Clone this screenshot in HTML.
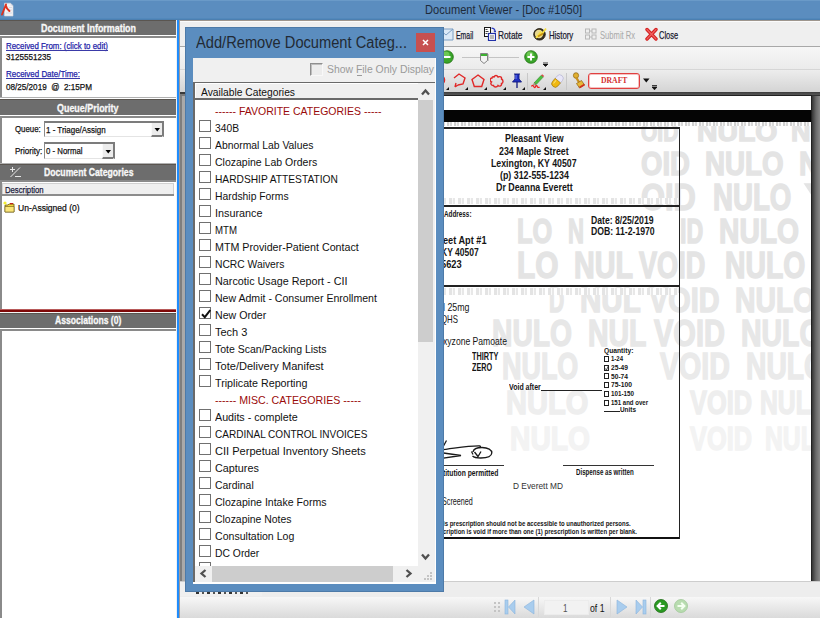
<!DOCTYPE html>
<html><head><meta charset="utf-8"><style>
html,body{margin:0;padding:0;width:820px;height:618px;overflow:hidden;background:#fff;position:relative;font-family:'Liberation Sans', sans-serif}
div{box-sizing:border-box}
</style></head><body>
<div style="position:absolute;left:0px;top:0px;width:820px;height:20px;background:#5b8dbf"></div>
<div style="position:absolute;left:0px;top:0px;width:820px;height:1px;background:#6a9ac8"></div>
<div style="position:absolute;left:0px;top:18px;width:820px;height:1px;background:#5288bb"></div>
<div style="position:absolute;left:0px;top:19px;width:820px;height:1px;background:#4c7fb0"></div>
<svg style="position:absolute;left:0px;top:0px" width="16" height="18" viewBox="0 0 16 18"><path d="M4.5 3.2h6l2.5 2.5v10.3h-8.5z" fill="#f2f2f4" stroke="#d8d8e0" stroke-width="0.6"/><path d="M10.5 5h2M9 7.5h3M9 10h3M6 13h6" stroke="#c8c8d8" stroke-width="0.6"/><path d="M2 14.5L6 4.5M5.8 5.5c.6 2.5 1.5 4.2 3.7 5.6" fill="none" stroke="#e0301c" stroke-width="1.9" stroke-linecap="round"/></svg>
<div style="position:absolute;left:424.80px;top:3.03px;font:normal 13.5px 'Liberation Sans', sans-serif;line-height:13.5px;color:#1e2a3a;white-space:pre;transform:scaleX(0.8215);transform-origin:0 0;">Document Viewer - [Doc #1050]</div>
<div style="position:absolute;left:180px;top:20px;width:640px;height:76px;background:#f0f0f0"></div>
<div style="position:absolute;left:180px;top:20px;width:640px;height:1px;background:#9e968e"></div>
<div style="position:absolute;left:180px;top:21px;width:640px;height:1px;background:#fbfbfb"></div>
<div style="position:absolute;left:180px;top:22px;width:640px;height:24px;background:#efefef"></div>
<div style="position:absolute;left:180px;top:46px;width:640px;height:1px;background:#a8a8a8"></div>
<div style="position:absolute;left:180px;top:47px;width:640px;height:22px;background:linear-gradient(#f6f6f6,#ebebeb)"></div>
<div style="position:absolute;left:180px;top:69px;width:640px;height:1px;background:#d6d6d6"></div>
<div style="position:absolute;left:180px;top:70px;width:640px;height:22px;background:linear-gradient(#ededed,#d4d4d4)"></div>
<div style="position:absolute;left:185px;top:92px;width:635px;height:4px;background:linear-gradient(#3c3c3c,#555 60%,#222)"></div>
<div style="position:absolute;left:180px;top:92px;width:5px;height:2px;background:#3a3a3a"></div>
<div style="position:absolute;left:180px;top:94px;width:5px;height:2px;background:#7a7a7a"></div>
<div style="position:absolute;left:180px;top:96px;width:640px;height:486px;background:#a9a9a9"></div>
<div style="position:absolute;left:180px;top:96px;width:2px;height:486px;background:#7e7e7e"></div>
<div style="position:absolute;left:300px;top:95px;width:512px;height:487px;background:#fff;border-top:1px solid #222;border-right:1px solid #222"></div>
<div style="position:absolute;left:812px;top:96px;width:8px;height:486px;background:linear-gradient(90deg,#353535,#6a6a6a 50%,#8a8a8a)"></div>
<div style="position:absolute;left:180px;top:582px;width:640px;height:36px;background:#ededed"></div>
<div style="position:absolute;left:180px;top:597px;width:640px;height:21px;background:linear-gradient(#f7f7f7,#dadada)"></div>
<div style="position:absolute;left:180px;top:581px;width:640px;height:1px;background:#cdcdcd"></div>
<div style="position:absolute;left:300px;top:96px;width:511px;height:486px;overflow:hidden">
<div style="position:absolute;left:340.70px;top:22.20px;font:bold 28.0px 'Liberation Sans', sans-serif;line-height:28.0px;color:#e4e4e4;white-space:pre;transform:scaleX(0.7493);transform-origin:0 0;-webkit-text-stroke:1.4px #e4e4e4;">OID</div>
<div style="position:absolute;left:397.40px;top:22.20px;font:bold 28.0px 'Liberation Sans', sans-serif;line-height:28.0px;color:#e4e4e4;white-space:pre;transform:scaleX(1.0123);transform-origin:0 0;-webkit-text-stroke:1.4px #e4e4e4;">NULO</div>
<div style="position:absolute;left:491.00px;top:22.20px;font:bold 28.0px 'Liberation Sans', sans-serif;line-height:28.0px;color:#e4e4e4;white-space:pre;transform:scaleX(0.9641);transform-origin:0 0;-webkit-text-stroke:1.4px #e4e4e4;">NU</div>
<div style="position:absolute;left:340.70px;top:50.78px;font:bold 33.43px 'Liberation Sans', sans-serif;line-height:33.43px;color:#e4e4e4;white-space:pre;transform:scaleX(0.8229);transform-origin:0 0;-webkit-text-stroke:1.4px #e4e4e4;">OID</div>
<div style="position:absolute;left:405.00px;top:50.78px;font:bold 33.43px 'Liberation Sans', sans-serif;line-height:33.43px;color:#e4e4e4;white-space:pre;transform:scaleX(0.8290);transform-origin:0 0;-webkit-text-stroke:1.4px #e4e4e4;">NULO</div>
<div style="position:absolute;left:499.00px;top:50.78px;font:bold 33.43px 'Liberation Sans', sans-serif;line-height:33.43px;color:#e4e4e4;white-space:pre;transform:scaleX(0.8492);transform-origin:0 0;-webkit-text-stroke:1.4px #e4e4e4;">NU</div>
<div style="position:absolute;left:340.70px;top:83.53px;font:bold 36.43px 'Liberation Sans', sans-serif;line-height:36.43px;color:#e4e4e4;white-space:pre;transform:scaleX(0.8461);transform-origin:0 0;-webkit-text-stroke:1.4px #e4e4e4;">OID</div>
<div style="position:absolute;left:413.00px;top:83.53px;font:bold 36.43px 'Liberation Sans', sans-serif;line-height:36.43px;color:#e4e4e4;white-space:pre;transform:scaleX(0.7598);transform-origin:0 0;-webkit-text-stroke:1.4px #e4e4e4;">NULO</div>
<div style="position:absolute;left:505.00px;top:83.53px;font:bold 36.43px 'Liberation Sans', sans-serif;line-height:36.43px;color:#e4e4e4;white-space:pre;transform:scaleX(1.8521);transform-origin:0 0;-webkit-text-stroke:1.4px #e4e4e4;">V</div>
<div style="position:absolute;left:217.40px;top:118.32px;font:bold 34.57px 'Liberation Sans', sans-serif;line-height:34.57px;color:#e4e4e4;white-space:pre;transform:scaleX(0.7333);transform-origin:0 0;-webkit-text-stroke:1.4px #e4e4e4;">LO</div>
<div style="position:absolute;left:268.00px;top:118.32px;font:bold 34.57px 'Liberation Sans', sans-serif;line-height:34.57px;color:#e4e4e4;white-space:pre;transform:scaleX(0.6408);transform-origin:0 0;-webkit-text-stroke:1.4px #e4e4e4;">N</div>
<div style="position:absolute;left:379.80px;top:118.32px;font:bold 34.57px 'Liberation Sans', sans-serif;line-height:34.57px;color:#e4e4e4;white-space:pre;transform:scaleX(0.6712);transform-origin:0 0;-webkit-text-stroke:1.4px #e4e4e4;">ID</div>
<div style="position:absolute;left:419.00px;top:118.32px;font:bold 34.57px 'Liberation Sans', sans-serif;line-height:34.57px;color:#e4e4e4;white-space:pre;transform:scaleX(0.8170);transform-origin:0 0;-webkit-text-stroke:1.4px #e4e4e4;">NULO</div>
<div style="position:absolute;left:217.00px;top:152.03px;font:bold 36.43px 'Liberation Sans', sans-serif;line-height:36.43px;color:#e4e4e4;white-space:pre;transform:scaleX(0.8205);transform-origin:0 0;-webkit-text-stroke:1.4px #e4e4e4;">LO</div>
<div style="position:absolute;left:274.00px;top:152.03px;font:bold 36.43px 'Liberation Sans', sans-serif;line-height:36.43px;color:#e4e4e4;white-space:pre;transform:scaleX(0.7881);transform-origin:0 0;-webkit-text-stroke:1.4px #e4e4e4;">NUL</div>
<div style="position:absolute;left:338.70px;top:152.03px;font:bold 36.43px 'Liberation Sans', sans-serif;line-height:36.43px;color:#e4e4e4;white-space:pre;transform:scaleX(0.7446);transform-origin:0 0;-webkit-text-stroke:1.4px #e4e4e4;">VOID</div>
<div style="position:absolute;left:424.80px;top:152.03px;font:bold 36.43px 'Liberation Sans', sans-serif;line-height:36.43px;color:#e4e4e4;white-space:pre;transform:scaleX(0.7772);transform-origin:0 0;-webkit-text-stroke:1.4px #e4e4e4;">NULO</div>
<div style="position:absolute;left:248.70px;top:186.65px;font:bold 35.71px 'Liberation Sans', sans-serif;line-height:35.71px;color:#e7e7e7;white-space:pre;transform:scaleX(0.5931);transform-origin:0 0;-webkit-text-stroke:1.4px #e7e7e7;">D</div>
<div style="position:absolute;left:280.00px;top:186.65px;font:bold 35.71px 'Liberation Sans', sans-serif;line-height:35.71px;color:#e7e7e7;white-space:pre;transform:scaleX(0.8271);transform-origin:0 0;-webkit-text-stroke:1.4px #e7e7e7;">NUL</div>
<div style="position:absolute;left:348.50px;top:186.65px;font:bold 35.71px 'Liberation Sans', sans-serif;line-height:35.71px;color:#e7e7e7;white-space:pre;transform:scaleX(0.8076);transform-origin:0 0;-webkit-text-stroke:1.4px #e7e7e7;">VOID</div>
<div style="position:absolute;left:434.60px;top:186.65px;font:bold 35.71px 'Liberation Sans', sans-serif;line-height:35.71px;color:#e7e7e7;white-space:pre;transform:scaleX(0.7948);transform-origin:0 0;-webkit-text-stroke:1.4px #e7e7e7;">NULO</div>
<div style="position:absolute;left:192.00px;top:219.53px;font:bold 36.43px 'Liberation Sans', sans-serif;line-height:36.43px;color:#e7e7e7;white-space:pre;transform:scaleX(0.7753);transform-origin:0 0;-webkit-text-stroke:1.4px #e7e7e7;">NULO</div>
<div style="position:absolute;left:288.00px;top:219.53px;font:bold 36.43px 'Liberation Sans', sans-serif;line-height:36.43px;color:#e7e7e7;white-space:pre;transform:scaleX(0.7815);transform-origin:0 0;-webkit-text-stroke:1.4px #e7e7e7;">NUL</div>
<div style="position:absolute;left:354.00px;top:219.53px;font:bold 36.43px 'Liberation Sans', sans-serif;line-height:36.43px;color:#e7e7e7;white-space:pre;transform:scaleX(0.7973);transform-origin:0 0;-webkit-text-stroke:1.4px #e7e7e7;">VOID</div>
<div style="position:absolute;left:440.50px;top:219.53px;font:bold 36.43px 'Liberation Sans', sans-serif;line-height:36.43px;color:#e7e7e7;white-space:pre;transform:scaleX(0.7801);transform-origin:0 0;-webkit-text-stroke:1.4px #e7e7e7;">NULO</div>
<div style="position:absolute;left:201.70px;top:252.43px;font:bold 37.14px 'Liberation Sans', sans-serif;line-height:37.14px;color:#eaeaea;white-space:pre;transform:scaleX(0.7254);transform-origin:0 0;-webkit-text-stroke:1.4px #eaeaea;">NULO</div>
<div style="position:absolute;left:360.00px;top:252.43px;font:bold 37.14px 'Liberation Sans', sans-serif;line-height:37.14px;color:#eaeaea;white-space:pre;transform:scaleX(0.7712);transform-origin:0 0;-webkit-text-stroke:1.4px #eaeaea;">VOID</div>
<div style="position:absolute;left:446.00px;top:252.43px;font:bold 37.14px 'Liberation Sans', sans-serif;line-height:37.14px;color:#eaeaea;white-space:pre;transform:scaleX(0.7605);transform-origin:0 0;-webkit-text-stroke:1.4px #eaeaea;">NULO</div>
<div style="position:absolute;left:205.70px;top:290.47px;font:bold 33.57px 'Liberation Sans', sans-serif;line-height:33.57px;color:#eeeeee;white-space:pre;transform:scaleX(0.8655);transform-origin:0 0;-webkit-text-stroke:1.4px #eeeeee;">NULO</div>
<div style="position:absolute;left:390.00px;top:290.47px;font:bold 33.57px 'Liberation Sans', sans-serif;line-height:33.57px;color:#eeeeee;white-space:pre;transform:scaleX(0.7555);transform-origin:0 0;-webkit-text-stroke:1.4px #eeeeee;">VOID</div>
<div style="position:absolute;left:460.00px;top:290.47px;font:bold 33.57px 'Liberation Sans', sans-serif;line-height:33.57px;color:#eeeeee;white-space:pre;transform:scaleX(0.7361);transform-origin:0 0;-webkit-text-stroke:1.4px #eeeeee;">NULO</div>
<div style="position:absolute;left:210.00px;top:325.83px;font:bold 33.14px 'Liberation Sans', sans-serif;line-height:33.14px;color:#f3f3f3;white-space:pre;transform:scaleX(0.8525);transform-origin:0 0;-webkit-text-stroke:1.4px #f3f3f3;">NULO</div>
<div style="position:absolute;left:390.00px;top:325.83px;font:bold 33.14px 'Liberation Sans', sans-serif;line-height:33.14px;color:#f3f3f3;white-space:pre;transform:scaleX(0.7654);transform-origin:0 0;-webkit-text-stroke:1.4px #f3f3f3;">VOID</div>
<div style="position:absolute;left:465.00px;top:325.83px;font:bold 33.14px 'Liberation Sans', sans-serif;line-height:33.14px;color:#f3f3f3;white-space:pre;transform:scaleX(0.7459);transform-origin:0 0;-webkit-text-stroke:1.4px #f3f3f3;">NULO</div>
</div>
<div style="position:absolute;left:300px;top:110px;width:511px;height:12px;background:#050505"></div>
<div style="position:absolute;left:440px;top:122px;width:371px;height:4px;background:repeating-linear-gradient(90deg,#cfcfcf 0 2px,#f4f4f4 2px 3px,#d8d8d8 3px 5px,#fff 5px 7px)"></div>
<div style="position:absolute;left:440px;top:198px;width:238px;height:6px;background:repeating-linear-gradient(90deg,#e4e4e4 0 3px,#fafafa 3px 4px,#e8e8e8 4px 6px,#fff 6px 9px)"></div>
<div style="position:absolute;left:440px;top:288px;width:238px;height:7px;background:repeating-linear-gradient(90deg,#e4e4e4 0 3px,#fafafa 3px 4px,#e8e8e8 4px 6px,#fff 6px 9px)"></div>
<div style="position:absolute;left:300px;top:127px;width:380px;height:1.5px;background:#222"></div>
<div style="position:absolute;left:300px;top:205px;width:380px;height:1.5px;background:#222"></div>
<div style="position:absolute;left:300px;top:285px;width:380px;height:1.5px;background:#222"></div>
<div style="position:absolute;left:300px;top:537px;width:380px;height:2px;background:#111"></div>
<div style="position:absolute;left:678.5px;top:127px;width:1.5px;height:412px;background:#222"></div>
<div style="position:absolute;left:504.65px;top:133.15px;font:bold 11px 'Liberation Sans', sans-serif;line-height:11px;color:#151515;white-space:pre;transform:scaleX(0.8022);transform-origin:0 0;">Pleasant View</div>
<div style="position:absolute;left:499.15px;top:145.65px;font:bold 11px 'Liberation Sans', sans-serif;line-height:11px;color:#151515;white-space:pre;transform:scaleX(0.8027);transform-origin:0 0;">234 Maple Street</div>
<div style="position:absolute;left:491.20px;top:158.15px;font:bold 11px 'Liberation Sans', sans-serif;line-height:11px;color:#151515;white-space:pre;transform:scaleX(0.7971);transform-origin:0 0;">Lexington, KY 40507</div>
<div style="position:absolute;left:499.60px;top:170.15px;font:bold 11px 'Liberation Sans', sans-serif;line-height:11px;color:#151515;white-space:pre;transform:scaleX(0.8037);transform-origin:0 0;">(p) 312-555-1234</div>
<div style="position:absolute;left:495.65px;top:182.15px;font:bold 11px 'Liberation Sans', sans-serif;line-height:11px;color:#151515;white-space:pre;transform:scaleX(0.8042);transform-origin:0 0;">Dr Deanna Everett</div>
<div style="position:absolute;left:443.50px;top:210.28px;font:bold 8.5px 'Liberation Sans', sans-serif;line-height:8.5px;color:#151515;white-space:pre;transform:scaleX(0.7464);transform-origin:0 0;">Address:</div>
<div style="position:absolute;left:590.60px;top:215.15px;font:bold 11px 'Liberation Sans', sans-serif;line-height:11px;color:#151515;white-space:pre;transform:scaleX(0.7862);transform-origin:0 0;">Date: 8/25/2019</div>
<div style="position:absolute;left:590.60px;top:226.15px;font:bold 11px 'Liberation Sans', sans-serif;line-height:11px;color:#151515;white-space:pre;transform:scaleX(0.7892);transform-origin:0 0;">DOB: 11-2-1970</div>
<div style="position:absolute;left:442.50px;top:235.15px;font:bold 11px 'Liberation Sans', sans-serif;line-height:11px;color:#151515;white-space:pre;transform:scaleX(0.8338);transform-origin:0 0;">eet Apt #1</div>
<div style="position:absolute;left:441.00px;top:247.15px;font:bold 11px 'Liberation Sans', sans-serif;line-height:11px;color:#151515;white-space:pre;transform:scaleX(0.7736);transform-origin:0 0;">KY 40507</div>
<div style="position:absolute;left:440.50px;top:259.15px;font:bold 11px 'Liberation Sans', sans-serif;line-height:11px;color:#151515;white-space:pre;transform:scaleX(0.8454);transform-origin:0 0;">5623</div>
<div style="position:absolute;left:443.00px;top:302.07px;font:normal 10.5px 'Liberation Sans', sans-serif;line-height:10.5px;color:#151515;white-space:pre;transform:scaleX(0.8409);transform-origin:0 0;">l 25mg</div>
<div style="position:absolute;left:440.50px;top:314.07px;font:normal 10.5px 'Liberation Sans', sans-serif;line-height:10.5px;color:#151515;white-space:pre;transform:scaleX(0.7467);transform-origin:0 0;">QHS</div>
<div style="position:absolute;left:442.50px;top:335.57px;font:normal 10.5px 'Liberation Sans', sans-serif;line-height:10.5px;color:#151515;white-space:pre;transform:scaleX(0.8182);transform-origin:0 0;">xyzone Pamoate</div>
<div style="position:absolute;left:471.70px;top:352.00px;font:bold 10px 'Liberation Sans', sans-serif;line-height:10px;color:#151515;white-space:pre;transform:scaleX(0.7283);transform-origin:0 0;">THIRTY</div>
<div style="position:absolute;left:471.70px;top:362.50px;font:bold 10px 'Liberation Sans', sans-serif;line-height:10px;color:#151515;white-space:pre;transform:scaleX(0.7199);transform-origin:0 0;">ZERO</div>
<div style="position:absolute;left:509.00px;top:382.43px;font:bold 9.5px 'Liberation Sans', sans-serif;line-height:9.5px;color:#151515;white-space:pre;transform:scaleX(0.7377);transform-origin:0 0;">Void after</div>
<div style="position:absolute;left:541px;top:390px;width:61px;height:1px;background:#222"></div>
<div style="position:absolute;left:604.00px;top:346.70px;font:bold 8px 'Liberation Sans', sans-serif;line-height:8px;color:#151515;white-space:pre;transform:scaleX(0.8374);transform-origin:0 0;">Quantity:</div>
<div style="position:absolute;left:604px;top:356.0px;width:5px;height:6px;border:1px solid #222;background:#fff"></div>
<div style="position:absolute;left:611.00px;top:355.20px;font:bold 8px 'Liberation Sans', sans-serif;line-height:8px;color:#151515;white-space:pre;transform:scaleX(0.7493);transform-origin:0 0;">1-24</div>
<div style="position:absolute;left:604px;top:364.7px;width:5px;height:6px;border:1px solid #222;background:#fff"></div>
<div style="position:absolute;left:611.00px;top:363.90px;font:bold 8px 'Liberation Sans', sans-serif;line-height:8px;color:#151515;white-space:pre;transform:scaleX(0.8305);transform-origin:0 0;">25-49</div>
<div style="position:absolute;left:604px;top:373.4px;width:5px;height:6px;border:1px solid #222;background:#fff"></div>
<div style="position:absolute;left:611.00px;top:372.60px;font:bold 8px 'Liberation Sans', sans-serif;line-height:8px;color:#151515;white-space:pre;transform:scaleX(0.8305);transform-origin:0 0;">50-74</div>
<div style="position:absolute;left:604px;top:382.1px;width:5px;height:6px;border:1px solid #222;background:#fff"></div>
<div style="position:absolute;left:611.00px;top:381.30px;font:bold 8px 'Liberation Sans', sans-serif;line-height:8px;color:#151515;white-space:pre;transform:scaleX(0.8426);transform-origin:0 0;">75-100</div>
<div style="position:absolute;left:604px;top:390.8px;width:5px;height:6px;border:1px solid #222;background:#fff"></div>
<div style="position:absolute;left:611.00px;top:390.00px;font:bold 8px 'Liberation Sans', sans-serif;line-height:8px;color:#151515;white-space:pre;transform:scaleX(0.7834);transform-origin:0 0;">101-150</div>
<div style="position:absolute;left:604px;top:399.5px;width:5px;height:6px;border:1px solid #222;background:#fff"></div>
<div style="position:absolute;left:611.00px;top:398.70px;font:bold 8px 'Liberation Sans', sans-serif;line-height:8px;color:#151515;white-space:pre;transform:scaleX(0.7563);transform-origin:0 0;">151 and over</div>
<svg style="position:absolute;left:604px;top:364.5px" width="5" height="6"><path d="M0.5 3l2 2L4.5 0.5" stroke="#222" stroke-width="0.8" fill="none"/></svg>
<div style="position:absolute;left:604px;top:411px;width:16px;height:1px;background:#222"></div>
<div style="position:absolute;left:620.00px;top:405.70px;font:bold 8px 'Liberation Sans', sans-serif;line-height:8px;color:#151515;white-space:pre;transform:scaleX(0.8000);transform-origin:0 0;">Units</div>
<svg style="position:absolute;left:430px;top:436px" width="80" height="28" viewBox="430 436 80 28"><path d="M443.5 446l3-5.5M440 450c14-1.5 28-4.5 39.5-4.2c1.5.4 1 1.6-.8 2.4M440 452.5l21 3l-21 3.2M473 452c.5-3 4-4.5 9-4.5c6 0 10 2.5 9.8 5.5c-.3 3.5-5.5 5-11 5c-4 0-7.5-1.2-8.3-2M471.5 451.5l1.5 3M474.5 452l3.5 4.5l3-5" fill="none" stroke="#1a1a1a" stroke-width="1.3"/></svg>
<div style="position:absolute;left:430px;top:465px;width:74px;height:1px;background:#333"></div>
<div style="position:absolute;left:563px;top:464.5px;width:91px;height:1px;background:#333"></div>
<div style="position:absolute;left:442.50px;top:468.98px;font:bold 9.2px 'Liberation Sans', sans-serif;line-height:9.2px;color:#151515;white-space:pre;transform:scaleX(0.7346);transform-origin:0 0;">titution permitted</div>
<div style="position:absolute;left:575.70px;top:468.35px;font:bold 9px 'Liberation Sans', sans-serif;line-height:9px;color:#151515;white-space:pre;transform:scaleX(0.6826);transform-origin:0 0;">Dispense as written</div>
<div style="position:absolute;left:513.00px;top:480.67px;font:normal 9.8px 'Liberation Sans', sans-serif;line-height:9.8px;color:#333;white-space:pre;transform:scaleX(0.8504);transform-origin:0 0;">D Everett MD</div>
<div style="position:absolute;left:441.50px;top:495.57px;font:normal 10.5px 'Liberation Sans', sans-serif;line-height:10.5px;color:#151515;white-space:pre;transform:scaleX(0.6852);transform-origin:0 0;">Screened</div>
<div style="position:absolute;left:442.50px;top:520.20px;font:bold 8px 'Liberation Sans', sans-serif;line-height:8px;color:#151515;white-space:pre;transform:scaleX(0.7500);transform-origin:0 0;">is prescription should not be accessible to unauthorized persons.</div>
<div style="position:absolute;left:442.50px;top:528.20px;font:bold 8px 'Liberation Sans', sans-serif;line-height:8px;color:#151515;white-space:pre;transform:scaleX(0.7486);transform-origin:0 0;">cription is void if more than one (1) prescription is written per blank.</div>
<svg style="position:absolute;left:438px;top:27px" width="16" height="14" viewBox="0 0 16 14"><path d="M1 2h14v11H1z" fill="#dce9f7" stroke="#7d9fc4" stroke-width="1"/><path d="M1 2l7 6l7-6" fill="none" stroke="#7d9fc4" stroke-width="1"/></svg>
<div style="position:absolute;left:455.90px;top:30.28px;font:normal 10.5px 'Liberation Sans', sans-serif;line-height:10.5px;color:#1a1a30;white-space:pre;transform:scaleX(0.6548);transform-origin:0 0;-webkit-text-stroke:0.25px currentColor;">Email</div>
<svg style="position:absolute;left:484px;top:27px" width="12" height="14" viewBox="0 0 12 14"><rect x="0.5" y="0.5" width="6" height="9" fill="#fff" stroke="#151515"/><path d="M1.5 2.5h2M1.5 4.5h3M1.5 6.5h2" stroke="#444" stroke-width="1"/><rect x="4.5" y="6.5" width="7" height="7" fill="#fff" stroke="#2030a8" stroke-width="1.2"/><rect x="6" y="8" width="4" height="4" fill="#b8b8b8"/><path d="M7.5 1.2c2 0 3.5 1 3.5 3.3" fill="none" stroke="#2a3ac0" stroke-width="1.2"/><path d="M9.3 3.8h3.4l-1.7 2z" fill="#2a3ac0"/></svg>
<div style="position:absolute;left:498.30px;top:30.28px;font:normal 10.5px 'Liberation Sans', sans-serif;line-height:10.5px;color:#1a1a30;white-space:pre;transform:scaleX(0.7887);transform-origin:0 0;-webkit-text-stroke:0.25px currentColor;">Rotate</div>
<svg style="position:absolute;left:533px;top:27px" width="14" height="14" viewBox="0 0 14 14"><circle cx="6.5" cy="7.3" r="5.8" fill="#3a3020" stroke="#1a1408" stroke-width="0.8"/><circle cx="6" cy="7" r="4.2" fill="#e8d890"/><path d="M3 11l4.5-5.5l1 2l4.5-6" fill="none" stroke="#f8e040" stroke-width="1.8"/><path d="M5 9.5l5-3" stroke="#c89010" stroke-width="1.6"/></svg>
<div style="position:absolute;left:548.80px;top:30.28px;font:normal 10.5px 'Liberation Sans', sans-serif;line-height:10.5px;color:#1a1a30;white-space:pre;transform:scaleX(0.7407);transform-origin:0 0;-webkit-text-stroke:0.25px currentColor;">History</div>
<svg style="position:absolute;left:585px;top:28px" width="12" height="12" viewBox="0 0 12 12"><g fill="none" stroke="#b8b8b8" stroke-width="1"><rect x="0.5" y="1" width="4" height="4"/><rect x="7" y="1" width="4" height="4"/><rect x="0.5" y="7" width="4" height="4"/><rect x="7" y="7" width="4" height="4"/><path d="M4.5 3h2.5M4.5 9h2.5"/></g></svg>
<div style="position:absolute;left:599.50px;top:30.28px;font:normal 10.5px 'Liberation Sans', sans-serif;line-height:10.5px;color:#a8a8a8;white-space:pre;transform:scaleX(0.7246);transform-origin:0 0;">Submit Rx</div>
<svg style="position:absolute;left:645px;top:27px" width="13" height="14" viewBox="0 0 13 14"><path d="M2 2.5l9 9.5M11 2.5l-9 9.5" stroke="#d42020" stroke-width="3.4" stroke-linecap="round"/><path d="M2 2.5l9 9.5M11 2.5l-9 9.5" stroke="#f06060" stroke-width="1.2" stroke-linecap="round"/></svg>
<div style="position:absolute;left:659.40px;top:30.28px;font:normal 10.5px 'Liberation Sans', sans-serif;line-height:10.5px;color:#1a1a30;white-space:pre;transform:scaleX(0.7111);transform-origin:0 0;-webkit-text-stroke:0.25px currentColor;">Close</div>
<svg style="position:absolute;left:440px;top:50px" width="14" height="14" viewBox="0 0 14 14"><circle cx="7" cy="7" r="6.3" fill="#3aa52a" stroke="#207010" stroke-width="0.8"/><circle cx="6" cy="5" r="3.5" fill="#8fe070" opacity="0.6"/><path d="M3.5 7h7" stroke="#fff" stroke-width="2"/></svg>
<div style="position:absolute;left:462px;top:57px;width:57px;height:1px;background:#c4c4c4"></div>
<div style="position:absolute;left:488px;top:54px;width:1px;height:7px;background:#c8c8c8"></div>
<svg style="position:absolute;left:480px;top:53px" width="8" height="11" viewBox="0 0 8 11"><path d="M0.5 0.5h7v7l-3.5 3l-3.5-3z" fill="#f4f4f4" stroke="#777" stroke-width="0.9"/><rect x="1" y="1" width="6" height="2" fill="#3cb030"/></svg>
<svg style="position:absolute;left:524px;top:50px" width="14" height="14" viewBox="0 0 14 14"><circle cx="7" cy="7" r="6.3" fill="#3aa52a" stroke="#207010" stroke-width="0.8"/><circle cx="6" cy="5" r="3.5" fill="#8fe070" opacity="0.6"/><path d="M3.5 7h7M7 3.5v7" stroke="#fff" stroke-width="2"/></svg>
<svg style="position:absolute;left:543px;top:62px" width="5" height="5" viewBox="0 0 5 5"><path d="M0 0h5M0 2h5L2.5 4.5z" stroke="#111" stroke-width="0.8" fill="#111"/></svg>
<svg style="position:absolute;left:434px;top:73px" width="12" height="14" viewBox="0 0 12 14"><circle cx="6" cy="7" r="4.5" fill="none" stroke="#e02828" stroke-width="1.6"/></svg>
<svg style="position:absolute;left:446px;top:87px" width="3" height="3" viewBox="0 0 3 3"><path d="M3 0v3H0z" fill="#111"/></svg>
<svg style="position:absolute;left:465px;top:87px" width="3" height="3" viewBox="0 0 3 3"><path d="M3 0v3H0z" fill="#111"/></svg>
<svg style="position:absolute;left:484px;top:87px" width="3" height="3" viewBox="0 0 3 3"><path d="M3 0v3H0z" fill="#111"/></svg>
<svg style="position:absolute;left:503px;top:87px" width="3" height="3" viewBox="0 0 3 3"><path d="M3 0v3H0z" fill="#111"/></svg>
<svg style="position:absolute;left:522px;top:87px" width="3" height="3" viewBox="0 0 3 3"><path d="M3 0v3H0z" fill="#111"/></svg>
<svg style="position:absolute;left:543px;top:87px" width="3" height="3" viewBox="0 0 3 3"><path d="M3 0v3H0z" fill="#111"/></svg>
<svg style="position:absolute;left:452px;top:73px" width="15" height="15" viewBox="0 0 15 15"><path d="M2 5l5-4l6 4l-2 6l-5 1M6 12l-3 2M3 14l1-4" fill="none" stroke="#e02828" stroke-width="1.4"/></svg>
<svg style="position:absolute;left:471px;top:74px" width="14" height="14" viewBox="0 0 14 14"><path d="M7 1l6 4.5l-2.3 7h-7.4l-2.3-7z" fill="none" stroke="#e02828" stroke-width="1.4"/></svg>
<svg style="position:absolute;left:490px;top:74px" width="14" height="14" viewBox="0 0 14 14"><path d="M4 3c1-2 3-2 4 0c2-1 4 0 3.5 2c2 1 2 4 0 4.5c.5 2-2 3.5-3.5 2c-1 2-4 2-4.5 0c-2 .5-3.5-2-2-3.5c-2-1-1.5-4 .5-4c0-1 1-1.5 2-1z" fill="none" stroke="#e02828" stroke-width="1.4"/></svg>
<svg style="position:absolute;left:511px;top:73px" width="12" height="16" viewBox="0 0 12 16"><path d="M3 1h6M4 1v5l-2.5 3h9L8 6V1" fill="#2030c0" stroke="#101880" stroke-width="0.9"/><path d="M6 9v6" stroke="#101880" stroke-width="1.3"/><path d="M5 2v4" stroke="#7080ff" stroke-width="1"/></svg>
<div style="position:absolute;left:527px;top:73px;width:1px;height:17px;background:#c8c8c8"></div>
<svg style="position:absolute;left:530px;top:72px" width="15" height="17" viewBox="0 0 15 17"><path d="M4.2 10.8l7-7.5l2 1.8l-7 7.5z" fill="#4cc040" stroke="#2a7a20" stroke-width="0.5"/><path d="M11.2 3.3l1-1l2 1.8l-.8 1z" fill="#e04848"/><path d="M4.2 10.8l-.7 2.4l2.6-.6z" fill="#e8c890" stroke="#333" stroke-width="0.4"/><path d="M1.5 14.5c.8-1.5 1.5-1.5 2.2 0s1.4 1.4 2-.3c.6-1.2 1.3-.4 1.8.6c.5.8 1.3.8 2 .2" fill="none" stroke="#f02020" stroke-width="1.3"/></svg>
<svg style="position:absolute;left:550px;top:73px" width="15" height="16" viewBox="0 0 15 16"><g transform="rotate(-50 7.5 8)"><rect x="0.5" y="4.5" width="14" height="7" rx="3.5" fill="#e8e6f8" stroke="#b0b0d0" stroke-width="0.6"/><path d="M8 4.5H4a3.5 3.5 0 0 0 0 7h4z" fill="#f0b810" stroke="#a07808" stroke-width="0.6"/><path d="M3 6.5h4" stroke="#f8e070" stroke-width="1"/></g></svg>
<div style="position:absolute;left:566px;top:73px;width:1px;height:17px;background:#c8c8c8"></div>
<svg style="position:absolute;left:571px;top:72px" width="15" height="17" viewBox="0 0 15 17"><ellipse cx="5" cy="3.5" rx="2.6" ry="2.8" fill="#e0b030" stroke="#8a6010" stroke-width="0.7"/><path d="M5.2 5.5l3 5" stroke="#c89020" stroke-width="2.4"/><path d="M5.5 11.5l5-3l3 4.5l-5 3z" fill="#e8b838" stroke="#8a6010" stroke-width="0.7"/><path d="M8.5 15.5l5-3" stroke="#d03020" stroke-width="1.6"/></svg>
<div style="position:absolute;left:588px;top:73px;width:52px;height:16px;background:#fff;border:1.5px solid #e04040;border-radius:3px;box-shadow:inset 0 0 0 1px #f6c0c0"></div>
<div style="position:absolute;left:600.75px;top:76.15px;font:bold 9px 'Liberation Serif', serif;line-height:9px;color:#d43030;white-space:pre;transform:scaleX(0.8548);transform-origin:0 0;">DRAFT</div>
<svg style="position:absolute;left:643px;top:78px" width="7" height="5" viewBox="0 0 7 5"><path d="M0 0.5h6.5L3.25 4.5z" fill="#111"/></svg>
<svg style="position:absolute;left:652px;top:85px" width="5" height="5" viewBox="0 0 5 5"><path d="M0 0.5h5M0 2h5L2.5 4.8z" stroke="#111" stroke-width="0.8" fill="#111"/></svg>
<div style="position:absolute;left:180px;top:582px;width:82px;height:14px;background:#f0f0f0"></div>
<div style="position:absolute;left:196px;top:592px;width:52px;height:1.5px;background:repeating-linear-gradient(90deg,#333 0 3px,transparent 3px 6px,#555 6px 8px,transparent 8px 11px)"></div>
<svg style="position:absolute;left:494px;top:602px" width="7" height="10" viewBox="0 0 7 10"><g fill="#c4c4c4"><rect x="0" y="0" width="2" height="2"/><rect x="4" y="0" width="2" height="2"/><rect x="0" y="4" width="2" height="2"/><rect x="4" y="4" width="2" height="2"/><rect x="0" y="8" width="2" height="2"/><rect x="4" y="8" width="2" height="2"/></g></svg>
<svg style="position:absolute;left:504px;top:599px" width="12" height="16" viewBox="0 0 12 16"><rect x="1" y="1" width="3" height="14" fill="#a9cdee" stroke="#8ab4dc" stroke-width="0.6"/><path d="M11 1L4.5 8L11 15z" fill="#a9cdee" stroke="#8ab4dc" stroke-width="0.6"/></svg>
<svg style="position:absolute;left:523px;top:599px" width="12" height="16" viewBox="0 0 12 16"><path d="M11 1L1 8L11 15z" fill="#a9cdee" stroke="#8ab4dc" stroke-width="0.6"/></svg>
<div style="position:absolute;left:538px;top:597px;width:1px;height:20px;background:#d8d8d8"></div>
<div style="position:absolute;left:544px;top:600px;width:45px;height:15px;background:#f2f2f2;border:1px solid #ececec"></div>
<div style="position:absolute;left:563.45px;top:602.58px;font:normal 10.5px 'Liberation Sans', sans-serif;line-height:10.5px;color:#555;white-space:pre;transform:scaleX(0.7701);transform-origin:0 0;">1</div>
<div style="position:absolute;left:590.40px;top:602.58px;font:normal 10.5px 'Liberation Sans', sans-serif;line-height:10.5px;color:#111;white-space:pre;transform:scaleX(0.8335);transform-origin:0 0;">of 1</div>
<div style="position:absolute;left:610px;top:597px;width:1px;height:20px;background:#d8d8d8"></div>
<svg style="position:absolute;left:616px;top:599px" width="12" height="16" viewBox="0 0 12 16"><path d="M1 1L11 8L1 15z" fill="#a9cdee" stroke="#8ab4dc" stroke-width="0.6"/></svg>
<svg style="position:absolute;left:635px;top:599px" width="12" height="16" viewBox="0 0 12 16"><path d="M1 1L7.5 8L1 15z" fill="#a9cdee" stroke="#8ab4dc" stroke-width="0.6"/><rect x="8" y="1" width="3" height="14" fill="#a9cdee" stroke="#8ab4dc" stroke-width="0.6"/></svg>
<div style="position:absolute;left:650px;top:597px;width:1px;height:20px;background:#d8d8d8"></div>
<svg style="position:absolute;left:654px;top:599px" width="14" height="14" viewBox="0 0 14 14"><circle cx="7" cy="7" r="6.5" fill="#2a9a22" stroke="#1a6a12" stroke-width="0.8"/><path d="M10.5 7h-6.5M6.8 3.8L3.6 7l3.2 3.2" fill="none" stroke="#fff" stroke-width="2"/></svg>
<svg style="position:absolute;left:674px;top:599px" width="14" height="14" viewBox="0 0 14 14"><circle cx="7" cy="7" r="6.5" fill="#b8dcb0" stroke="#a0c898" stroke-width="0.8"/><path d="M3.5 7h6.5M7.2 3.8L10.4 7l-3.2 3.2" fill="none" stroke="#f4fff0" stroke-width="2"/></svg>
<div style="position:absolute;left:0px;top:20px;width:176px;height:598px;background:#fff"></div>
<div style="position:absolute;left:0px;top:20px;width:176px;height:15px;background:#6d6d6d;border-top:1px solid #5a5550"></div>
<div style="position:absolute;left:40.50px;top:23.90px;font:bold 10px 'Liberation Sans', sans-serif;line-height:10px;color:#f8f8f8;white-space:pre;transform:scaleX(0.8906);transform-origin:0 0;-webkit-text-stroke:0.3px #f8f8f8;">Document Information</div>
<div style="position:absolute;left:0px;top:35px;width:176px;height:1px;background:#fff"></div>
<div style="position:absolute;left:0px;top:36px;width:176px;height:2px;background:#8a8a8a"></div>
<div style="position:absolute;left:0px;top:38px;width:2px;height:60px;background:#8a8a8a"></div>
<div style="position:absolute;left:6.00px;top:41.04px;font:normal 9.6px 'Liberation Sans', sans-serif;line-height:9.6px;color:#2222a8;white-space:pre;transform:scaleX(0.8211);transform-origin:0 0;-webkit-text-stroke:0.25px currentColor;">Received From: (click to edit)</div>
<div style="position:absolute;left:6px;top:50px;width:102px;height:1px;background:#3a3aa8"></div>
<div style="position:absolute;left:6.00px;top:52.44px;font:normal 9.6px 'Liberation Sans', sans-serif;line-height:9.6px;color:#111;white-space:pre;transform:scaleX(0.8433);transform-origin:0 0;-webkit-text-stroke:0.25px currentColor;">3125551235</div>
<div style="position:absolute;left:6.00px;top:69.04px;font:normal 9.6px 'Liberation Sans', sans-serif;line-height:9.6px;color:#2222a8;white-space:pre;transform:scaleX(0.8293);transform-origin:0 0;-webkit-text-stroke:0.25px currentColor;">Received Date/Time:</div>
<div style="position:absolute;left:6px;top:78px;width:74px;height:1px;background:#3a3aa8"></div>
<div style="position:absolute;left:6.00px;top:81.64px;font:normal 9.6px 'Liberation Sans', sans-serif;line-height:9.6px;color:#111;white-space:pre;transform:scaleX(0.8474);transform-origin:0 0;-webkit-text-stroke:0.25px currentColor;">08/25/2019  @  2:15PM</div>
<div style="position:absolute;left:0px;top:97px;width:176px;height:1px;background:#b0b0b0"></div>
<div style="position:absolute;left:0px;top:99px;width:176px;height:16px;background:#6d6d6d;border-top:1px solid #5a5550"></div>
<div style="position:absolute;left:57.25px;top:103.70px;font:bold 10px 'Liberation Sans', sans-serif;line-height:10px;color:#f8f8f8;white-space:pre;transform:scaleX(0.8925);transform-origin:0 0;-webkit-text-stroke:0.3px #f8f8f8;">Queue/Priority</div>
<div style="position:absolute;left:0px;top:115px;width:176px;height:1px;background:#fff"></div>
<div style="position:absolute;left:0px;top:116px;width:176px;height:2px;background:#8a8a8a"></div>
<div style="position:absolute;left:0px;top:118px;width:2px;height:46px;background:#8a8a8a"></div>
<div style="position:absolute;left:14.60px;top:124.24px;font:normal 9.6px 'Liberation Sans', sans-serif;line-height:9.6px;color:#111;white-space:pre;transform:scaleX(0.8195);transform-origin:0 0;-webkit-text-stroke:0.25px currentColor;">Queue:</div>
<div style="position:absolute;left:44px;top:121px;width:120px;height:16px;background:#fff;border-style:solid;border-width:2px 2px 1px 1px;border-color:#7c7c7c #7c7c7c #e4e4e4 #8a8a8a"></div>
<div style="position:absolute;left:151px;top:123px;width:11px;height:14px;background:#ececec;border-left:1px solid #fafafa;border-bottom:2px solid #7c7c7c"></div>
<svg style="position:absolute;left:154px;top:128px" width="7" height="4"><path d="M0.5 0h5.5L3.25 3.5z" fill="#000"/></svg>
<div style="position:absolute;left:46.00px;top:124.64px;font:normal 9.6px 'Liberation Sans', sans-serif;line-height:9.6px;color:#111;white-space:pre;transform:scaleX(0.8292);transform-origin:0 0;-webkit-text-stroke:0.25px currentColor;">1 - Triage/Assign</div>
<div style="position:absolute;left:14.60px;top:145.64px;font:normal 9.6px 'Liberation Sans', sans-serif;line-height:9.6px;color:#111;white-space:pre;transform:scaleX(0.8396);transform-origin:0 0;-webkit-text-stroke:0.25px currentColor;">Priority:</div>
<div style="position:absolute;left:44px;top:142px;width:71px;height:17px;background:#fff;border-style:solid;border-width:2px 2px 1px 1px;border-color:#7c7c7c #7c7c7c #e4e4e4 #8a8a8a"></div>
<div style="position:absolute;left:102px;top:144px;width:11px;height:15px;background:#ececec;border-left:1px solid #fafafa;border-bottom:2px solid #7c7c7c"></div>
<svg style="position:absolute;left:105px;top:150px" width="7" height="4"><path d="M0.5 0h5.5L3.25 3.5z" fill="#000"/></svg>
<div style="position:absolute;left:46.00px;top:146.44px;font:normal 9.6px 'Liberation Sans', sans-serif;line-height:9.6px;color:#111;white-space:pre;transform:scaleX(0.8151);transform-origin:0 0;-webkit-text-stroke:0.25px currentColor;">0 - Normal</div>
<div style="position:absolute;left:0px;top:163px;width:176px;height:1px;background:#b0b0b0"></div>
<div style="position:absolute;left:0px;top:164px;width:176px;height:16px;background:#6d6d6d;border-top:1px solid #5a5550"></div>
<div style="position:absolute;left:43.55px;top:168.10px;font:bold 10px 'Liberation Sans', sans-serif;line-height:10px;color:#f8f8f8;white-space:pre;transform:scaleX(0.8659);transform-origin:0 0;-webkit-text-stroke:0.3px #f8f8f8;">Document Categories</div>
<svg style="position:absolute;left:9px;top:166px" width="13" height="12" viewBox="0 0 13 12"><path d="M1 3.5h5M3.5 1v5M1.5 11L11 1.5M6 10.5h6" stroke="#e8e8e8" stroke-width="1" fill="none"/></svg>
<div style="position:absolute;left:0px;top:180px;width:176px;height:2px;background:#8a8a8a"></div>
<div style="position:absolute;left:0px;top:182px;width:2px;height:128px;background:#8a8a8a"></div>
<div style="position:absolute;left:2px;top:183px;width:172px;height:13px;background:#efefef;border:1px solid #d0d0d0"></div>
<div style="position:absolute;left:2px;top:194px;width:172px;height:2px;background:#8c8c8c"></div>
<div style="position:absolute;left:5.40px;top:184.64px;font:normal 9.6px 'Liberation Sans', sans-serif;line-height:9.6px;color:#1a1a3a;white-space:pre;transform:scaleX(0.8042);transform-origin:0 0;-webkit-text-stroke:0.25px currentColor;">Description</div>
<svg style="position:absolute;left:3px;top:201px" width="13" height="12" viewBox="0 0 13 12"><path d="M2 4h3l1-1h5v8H2z" fill="#f1d23e" stroke="#6b5a10" stroke-width="0.8"/><path d="M2 5.5h9v5.5H2z" fill="#fbe67a" stroke="#6b5a10" stroke-width="0.6"/><circle cx="2" cy="2" r="1.6" fill="#f6f030"/><path d="M7 2.6h3" stroke="#c02020" stroke-width="1.2"/></svg>
<div style="position:absolute;left:18.20px;top:203.44px;font:normal 9.6px 'Liberation Sans', sans-serif;line-height:9.6px;color:#111;white-space:pre;transform:scaleX(0.8885);transform-origin:0 0;-webkit-text-stroke:0.25px currentColor;">Un-Assigned (0)</div>
<div style="position:absolute;left:0px;top:309px;width:177px;height:1px;background:#b85a5a"></div>
<div style="position:absolute;left:0px;top:310px;width:177px;height:2px;background:#7e0808"></div>
<div style="position:absolute;left:0px;top:312px;width:176px;height:1px;background:#f4f4f4"></div>
<div style="position:absolute;left:0px;top:313px;width:176px;height:15px;background:#6d6d6d;border-top:1px solid #5a5550"></div>
<div style="position:absolute;left:54.85px;top:316.10px;font:bold 10px 'Liberation Sans', sans-serif;line-height:10px;color:#f8f8f8;white-space:pre;transform:scaleX(0.8583);transform-origin:0 0;-webkit-text-stroke:0.3px #f8f8f8;">Associations (0)</div>
<div style="position:absolute;left:0px;top:328px;width:176px;height:1px;background:#fff"></div>
<div style="position:absolute;left:0px;top:329px;width:176px;height:2px;background:#8a8a8a"></div>
<div style="position:absolute;left:0px;top:331px;width:2px;height:287px;background:#8a8a8a"></div>
<div style="position:absolute;left:176px;top:20px;width:1px;height:598px;background:#eef0f4"></div>
<div style="position:absolute;left:177px;top:20px;width:2px;height:598px;background:#1e8cfc"></div>
<div style="position:absolute;left:179px;top:20px;width:1px;height:598px;background:#a09a98"></div>
<div style="position:absolute;left:185px;top:27px;width:259px;height:565px;background:#5b8dbf;border:1px solid #4d7aa8"></div>
<div style="position:absolute;left:195.50px;top:35.17px;font:normal 15.8px 'Liberation Sans', sans-serif;line-height:15.8px;color:#222a34;white-space:pre;transform:scaleX(0.9278);transform-origin:0 0;">Add/Remove Document Categ...</div>
<div style="position:absolute;left:416px;top:33px;width:19px;height:19px;background:#c75050"></div>
<svg style="position:absolute;left:421px;top:38px" width="9" height="9" viewBox="0 0 9 9"><path d="M2 2l5 5M7 2l-5 5" stroke="#fff" stroke-width="1.5"/></svg>
<div style="position:absolute;left:193px;top:58px;width:243px;height:526px;background:#f0f0f0;border-right:1px solid #fff;border-bottom:2px solid #fff"></div>
<div style="position:absolute;left:310px;top:63px;width:13px;height:13px;background:#ececec;border:1px solid;border-color:#8e8e8e #f8f8f8 #f8f8f8 #8e8e8e;box-shadow:inset 1px 1px 0 #bdbdbd"></div>
<div style="position:absolute;left:327.30px;top:64.28px;font:normal 10.5px 'Liberation Sans', sans-serif;line-height:10.5px;color:#9a9a9a;white-space:pre;transform:scaleX(0.9912);transform-origin:0 0;">Show File Only Display</div>
<div style="position:absolute;left:357px;top:75px;width:5px;height:1px;background:#9a9a9a"></div>
<div style="position:absolute;left:193px;top:82px;width:242px;height:1px;background:#6a6a6a"></div>
<div style="position:absolute;left:193px;top:82px;width:2px;height:500px;background:#6a6a6a"></div>
<div style="position:absolute;left:195px;top:83px;width:240px;height:499px;background:#fff"></div>
<div style="position:absolute;left:195px;top:83px;width:223px;height:16px;background:#f0f0f0;border-top:1px solid #fff;border-left:1px solid #fff"></div>
<div style="position:absolute;left:195px;top:98px;width:223px;height:2px;background:#6a6a6a"></div>
<div style="position:absolute;left:201.20px;top:87.08px;font:normal 10.5px 'Liberation Sans', sans-serif;line-height:10.5px;color:#111;white-space:pre;transform:scaleX(0.9779);transform-origin:0 0;">Available Categories</div>
<div style="position:absolute;left:418px;top:83px;width:17px;height:483px;background:#f0f0f0"></div>
<div style="position:absolute;left:418px;top:100px;width:15px;height:242px;background:#cdcdcd"></div>
<svg style="position:absolute;left:421px;top:88px" width="9" height="8" viewBox="0 0 9 8"><path d="M1 6.5L4.5 2.5L8 6.5" fill="none" stroke="#505050" stroke-width="2.3"/></svg>
<svg style="position:absolute;left:421px;top:553px" width="9" height="8" viewBox="0 0 9 8"><path d="M1 1.5L4.5 5.5L8 1.5" fill="none" stroke="#505050" stroke-width="2.3"/></svg>
<div style="position:absolute;left:195px;top:566px;width:240px;height:16px;background:#f0f0f0"></div>
<div style="position:absolute;left:212px;top:566px;width:181px;height:16px;background:#cdcdcd"></div>
<svg style="position:absolute;left:199px;top:569px" width="8" height="9" viewBox="0 0 8 9"><path d="M6.5 1L2.5 4.5L6.5 8" fill="none" stroke="#505050" stroke-width="2.3"/></svg>
<svg style="position:absolute;left:405px;top:569px" width="8" height="9" viewBox="0 0 8 9"><path d="M1.5 1L5.5 4.5L1.5 8" fill="none" stroke="#505050" stroke-width="2.3"/></svg>
<svg style="position:absolute;left:421px;top:570px" width="12" height="12" viewBox="0 0 12 12"><g fill="#c4c4c4"><rect x="9" y="2" width="2" height="2"/><rect x="6" y="5" width="2" height="2"/><rect x="9" y="5" width="2" height="2"/><rect x="3" y="8" width="2" height="2"/><rect x="6" y="8" width="2" height="2"/><rect x="9" y="8" width="2" height="2"/></g></svg>
<div style="position:absolute;left:195px;top:100px;width:223px;height:466px;overflow:hidden">
<div style="position:absolute;left:215.00px;top:6.08px;font:normal 10.5px 'Liberation Sans', sans-serif;line-height:10.5px;color:#9a0a0a;white-space:pre;margin-left:-195px;">------ FAVORITE CATEGORIES -----</div>
<div style="position:absolute;left:4px;top:20px;width:12px;height:12px;background:#fff;border:1px solid #707070"></div>
<div style="position:absolute;left:215.00px;top:23.08px;font:normal 10.5px 'Liberation Sans', sans-serif;line-height:10.5px;color:#111;white-space:pre;transform:scaleX(0.9783);transform-origin:0 0;margin-left:-195px;">340B</div>
<div style="position:absolute;left:4px;top:37px;width:12px;height:12px;background:#fff;border:1px solid #707070"></div>
<div style="position:absolute;left:215.00px;top:40.08px;font:normal 10.5px 'Liberation Sans', sans-serif;line-height:10.5px;color:#111;white-space:pre;transform:scaleX(0.9877);transform-origin:0 0;margin-left:-195px;">Abnormal Lab Values</div>
<div style="position:absolute;left:4px;top:54px;width:12px;height:12px;background:#fff;border:1px solid #707070"></div>
<div style="position:absolute;left:215.00px;top:57.08px;font:normal 10.5px 'Liberation Sans', sans-serif;line-height:10.5px;color:#111;white-space:pre;margin-left:-195px;">Clozapine Lab Orders</div>
<div style="position:absolute;left:4px;top:71px;width:12px;height:12px;background:#fff;border:1px solid #707070"></div>
<div style="position:absolute;left:215.00px;top:74.08px;font:normal 10.5px 'Liberation Sans', sans-serif;line-height:10.5px;color:#111;white-space:pre;transform:scaleX(0.9715);transform-origin:0 0;margin-left:-195px;">HARDSHIP ATTESTATION</div>
<div style="position:absolute;left:4px;top:88px;width:12px;height:12px;background:#fff;border:1px solid #707070"></div>
<div style="position:absolute;left:215.00px;top:91.08px;font:normal 10.5px 'Liberation Sans', sans-serif;line-height:10.5px;color:#111;white-space:pre;transform:scaleX(0.9854);transform-origin:0 0;margin-left:-195px;">Hardship Forms</div>
<div style="position:absolute;left:4px;top:105px;width:12px;height:12px;background:#fff;border:1px solid #707070"></div>
<div style="position:absolute;left:215.00px;top:108.08px;font:normal 10.5px 'Liberation Sans', sans-serif;line-height:10.5px;color:#111;white-space:pre;transform:scaleX(1.0298);transform-origin:0 0;margin-left:-195px;">Insurance</div>
<div style="position:absolute;left:4px;top:122px;width:12px;height:12px;background:#fff;border:1px solid #707070"></div>
<div style="position:absolute;left:215.00px;top:125.08px;font:normal 10.5px 'Liberation Sans', sans-serif;line-height:10.5px;color:#111;white-space:pre;transform:scaleX(0.9197);transform-origin:0 0;margin-left:-195px;">MTM</div>
<div style="position:absolute;left:4px;top:139px;width:12px;height:12px;background:#fff;border:1px solid #707070"></div>
<div style="position:absolute;left:215.00px;top:142.07px;font:normal 10.5px 'Liberation Sans', sans-serif;line-height:10.5px;color:#111;white-space:pre;transform:scaleX(1.0183);transform-origin:0 0;margin-left:-195px;">MTM Provider-Patient Contact</div>
<div style="position:absolute;left:4px;top:156px;width:12px;height:12px;background:#fff;border:1px solid #707070"></div>
<div style="position:absolute;left:215.00px;top:159.07px;font:normal 10.5px 'Liberation Sans', sans-serif;line-height:10.5px;color:#111;white-space:pre;transform:scaleX(0.9805);transform-origin:0 0;margin-left:-195px;">NCRC Waivers</div>
<div style="position:absolute;left:4px;top:173px;width:12px;height:12px;background:#fff;border:1px solid #707070"></div>
<div style="position:absolute;left:215.00px;top:176.07px;font:normal 10.5px 'Liberation Sans', sans-serif;line-height:10.5px;color:#111;white-space:pre;transform:scaleX(1.0274);transform-origin:0 0;margin-left:-195px;">Narcotic Usage Report - CII</div>
<div style="position:absolute;left:4px;top:190px;width:12px;height:12px;background:#fff;border:1px solid #707070"></div>
<div style="position:absolute;left:215.00px;top:193.07px;font:normal 10.5px 'Liberation Sans', sans-serif;line-height:10.5px;color:#111;white-space:pre;transform:scaleX(1.0052);transform-origin:0 0;margin-left:-195px;">New Admit - Consumer Enrollment</div>
<div style="position:absolute;left:4px;top:207px;width:12px;height:12px;background:#fff;border:1px solid #707070"></div>
<svg style="position:absolute;left:6px;top:209px" width="10" height="10" viewBox="0 0 10 10"><path d="M1 5.2l2.8 3L9.3 1" fill="none" stroke="#111" stroke-width="2"/></svg>
<div style="position:absolute;left:215.00px;top:210.07px;font:normal 10.5px 'Liberation Sans', sans-serif;line-height:10.5px;color:#111;white-space:pre;transform:scaleX(1.0105);transform-origin:0 0;margin-left:-195px;">New Order</div>
<div style="position:absolute;left:4px;top:224px;width:12px;height:12px;background:#fff;border:1px solid #707070"></div>
<div style="position:absolute;left:215.00px;top:227.07px;font:normal 10.5px 'Liberation Sans', sans-serif;line-height:10.5px;color:#111;white-space:pre;transform:scaleX(1.0473);transform-origin:0 0;margin-left:-195px;">Tech 3</div>
<div style="position:absolute;left:4px;top:241px;width:12px;height:12px;background:#fff;border:1px solid #707070"></div>
<div style="position:absolute;left:215.00px;top:244.07px;font:normal 10.5px 'Liberation Sans', sans-serif;line-height:10.5px;color:#111;white-space:pre;margin-left:-195px;">Tote Scan/Packing Lists</div>
<div style="position:absolute;left:4px;top:258px;width:12px;height:12px;background:#fff;border:1px solid #707070"></div>
<div style="position:absolute;left:215.00px;top:261.07px;font:normal 10.5px 'Liberation Sans', sans-serif;line-height:10.5px;color:#111;white-space:pre;transform:scaleX(1.0523);transform-origin:0 0;margin-left:-195px;">Tote/Delivery Manifest</div>
<div style="position:absolute;left:4px;top:275px;width:12px;height:12px;background:#fff;border:1px solid #707070"></div>
<div style="position:absolute;left:215.00px;top:278.07px;font:normal 10.5px 'Liberation Sans', sans-serif;line-height:10.5px;color:#111;white-space:pre;transform:scaleX(1.0192);transform-origin:0 0;margin-left:-195px;">Triplicate Reporting</div>
<div style="position:absolute;left:215.00px;top:295.07px;font:normal 10.5px 'Liberation Sans', sans-serif;line-height:10.5px;color:#9a0a0a;white-space:pre;transform:scaleX(1.0107);transform-origin:0 0;margin-left:-195px;">------ MISC. CATEGORIES -----</div>
<div style="position:absolute;left:4px;top:309px;width:12px;height:12px;background:#fff;border:1px solid #707070"></div>
<div style="position:absolute;left:215.00px;top:312.07px;font:normal 10.5px 'Liberation Sans', sans-serif;line-height:10.5px;color:#111;white-space:pre;transform:scaleX(1.0182);transform-origin:0 0;margin-left:-195px;">Audits - complete</div>
<div style="position:absolute;left:4px;top:326px;width:12px;height:12px;background:#fff;border:1px solid #707070"></div>
<div style="position:absolute;left:215.00px;top:329.07px;font:normal 10.5px 'Liberation Sans', sans-serif;line-height:10.5px;color:#111;white-space:pre;transform:scaleX(0.9551);transform-origin:0 0;margin-left:-195px;">CARDINAL CONTROL INVOICES</div>
<div style="position:absolute;left:4px;top:343px;width:12px;height:12px;background:#fff;border:1px solid #707070"></div>
<div style="position:absolute;left:215.00px;top:346.07px;font:normal 10.5px 'Liberation Sans', sans-serif;line-height:10.5px;color:#111;white-space:pre;transform:scaleX(1.0538);transform-origin:0 0;margin-left:-195px;">CII Perpetual Inventory Sheets</div>
<div style="position:absolute;left:4px;top:360px;width:12px;height:12px;background:#fff;border:1px solid #707070"></div>
<div style="position:absolute;left:215.00px;top:363.07px;font:normal 10.5px 'Liberation Sans', sans-serif;line-height:10.5px;color:#111;white-space:pre;transform:scaleX(1.0279);transform-origin:0 0;margin-left:-195px;">Captures</div>
<div style="position:absolute;left:4px;top:377px;width:12px;height:12px;background:#fff;border:1px solid #707070"></div>
<div style="position:absolute;left:215.00px;top:380.07px;font:normal 10.5px 'Liberation Sans', sans-serif;line-height:10.5px;color:#111;white-space:pre;transform:scaleX(0.9895);transform-origin:0 0;margin-left:-195px;">Cardinal</div>
<div style="position:absolute;left:4px;top:394px;width:12px;height:12px;background:#fff;border:1px solid #707070"></div>
<div style="position:absolute;left:215.00px;top:397.07px;font:normal 10.5px 'Liberation Sans', sans-serif;line-height:10.5px;color:#111;white-space:pre;transform:scaleX(1.0055);transform-origin:0 0;margin-left:-195px;">Clozapine Intake Forms</div>
<div style="position:absolute;left:4px;top:411px;width:12px;height:12px;background:#fff;border:1px solid #707070"></div>
<div style="position:absolute;left:215.00px;top:414.07px;font:normal 10.5px 'Liberation Sans', sans-serif;line-height:10.5px;color:#111;white-space:pre;transform:scaleX(0.9929);transform-origin:0 0;margin-left:-195px;">Clozapine Notes</div>
<div style="position:absolute;left:4px;top:428px;width:12px;height:12px;background:#fff;border:1px solid #707070"></div>
<div style="position:absolute;left:215.00px;top:431.07px;font:normal 10.5px 'Liberation Sans', sans-serif;line-height:10.5px;color:#111;white-space:pre;transform:scaleX(1.0062);transform-origin:0 0;margin-left:-195px;">Consultation Log</div>
<div style="position:absolute;left:4px;top:445px;width:12px;height:12px;background:#fff;border:1px solid #707070"></div>
<div style="position:absolute;left:215.00px;top:448.07px;font:normal 10.5px 'Liberation Sans', sans-serif;line-height:10.5px;color:#111;white-space:pre;transform:scaleX(0.9858);transform-origin:0 0;margin-left:-195px;">DC Order</div>
<div style="position:absolute;left:4px;top:462px;width:12px;height:12px;background:#fff;border:1px solid #707070"></div>
</div>
</body></html>
